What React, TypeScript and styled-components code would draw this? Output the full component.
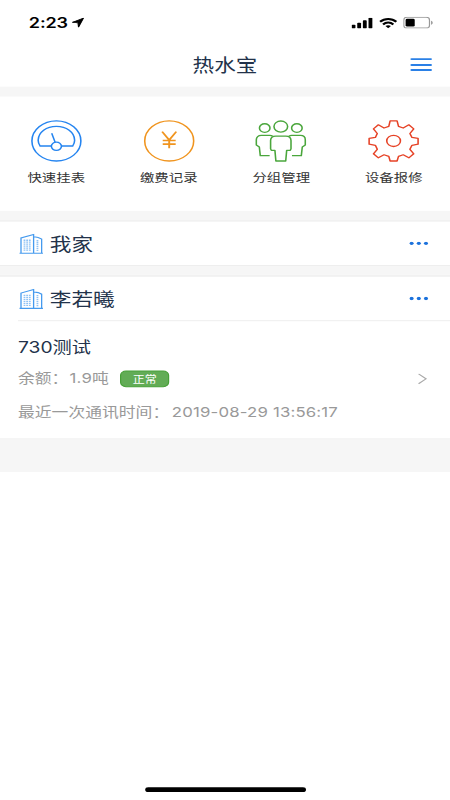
import React from "react";
import styled, { createGlobalStyle } from "styled-components";

const Global = createGlobalStyle`
  * { box-sizing: border-box; }
  html, body { margin: 0; padding: 0; background: #fff; }
  body { width: 450px; height: 800px; overflow: hidden; }
`;

const Viewport = styled.div`
  width: 450px;
  height: 800px;
  overflow: hidden;
  background: #fff;
`;

/* The 375x812 phone layout is stretched to fill the 450x800 viewport. */
const Phone = styled.div`
  width: 375px;
  height: 812px;
  transform: scale(1.2, 0.98522);
  transform-origin: 0 0;
  display: flex;
  flex-direction: column;
  font-family: Inter, "Noto Sans CJK SC", sans-serif;
  color: #22324a;
`;

const StatusBar = styled.div`
  height: 44px;
  padding: 0 14px 0 24px;
  display: flex;
  align-items: center;
  justify-content: space-between;
  color: #000;
  svg { display: block; }
`;

const Cluster = styled.div<{ $gap: number }>`
  display: flex;
  align-items: center;
  gap: ${(p) => p.$gap}px;
  padding-top: 2px;
`;

const Clock = styled.span`
  font-size: 15px;
  line-height: 20px;
  font-weight: 600;
  letter-spacing: -0.1px;
`;

const NavBar = styled.header`
  height: 44px;
  display: grid;
  grid-template-columns: 1fr auto 1fr;
  align-items: center;
  padding: 0 15px;
`;

const Title = styled.h1`
  grid-column: 2;
  margin: 0;
  padding-top: 2px;
  font-size: 18px;
  line-height: 26px;
  font-weight: 400;
`;

const MenuButton = styled.button`
  justify-self: end;
  border: 0;
  padding: 0;
  width: 18px;
  height: 13px;
  margin-bottom: 1px;
  background: none;
  display: flex;
  flex-direction: column;
  justify-content: space-between;
`;

const MenuLine = styled.span`
  height: 2px;
  border-radius: 1px;
  background: #2a80e6;
`;

const Content = styled.main`
  height: 391px;
  background: #f6f6f6;
  padding-top: 10px;
`;

const QuickActions = styled.nav`
  height: 116px;
  background: #fff;
  display: grid;
  grid-template-columns: repeat(4, 1fr);
  padding-top: 24px;
`;

const QuickAction = styled.div`
  display: flex;
  flex-direction: column;
  align-items: center;
  gap: 8px;
  font-size: 12px;
  line-height: 18px;
  color: #333;
  svg { display: block; overflow: visible; }
`;

const Group = styled.section`
  margin-top: 9px;
  background: #fff;
  border-top: 2px solid #f1f1f1;
  border-bottom: 1px solid #eee;
`;

const GroupHeader = styled.div`
  height: 44px;
  padding: 0 18.5px 0 16px;
  display: flex;
  align-items: center;
  svg { display: block; }
`;

const GroupName = styled.h2`
  margin: 0 0 0 5.5px;
  padding-top: 3px;
  flex: 1;
  font-size: 18px;
  line-height: 26px;
  font-weight: 400;
`;

const Device = styled.div`
  margin-left: 15px;
  height: 119.5px;
  border-top: 1px solid #eee;
  padding: 14px 19px 0 0;
  color: #999;
  font-size: 14px;
`;

const DeviceName = styled.h3`
  margin: 0;
  font-size: 16px;
  line-height: 24px;
  font-weight: 400;
  color: #22324a;
`;

const BalanceRow = styled.div`
  display: flex;
  align-items: center;
  height: 24px;
  margin-top: 8px;
  line-height: 24px;
`;

const Value = styled.span`
  margin-left: 1px;
  letter-spacing: 0.1px;
`;

const Timestamp = styled.span`
  margin-left: 2.2px;
  letter-spacing: 0.13px;
`;

const Status = styled.span`
  width: 41px;
  height: 17px;
  margin-left: 9.5px;
  border: 1px solid #47a038;
  border-radius: 5px;
  background: #62ac56;
  color: #fff;
  font-size: 10px;
  line-height: 16px;
  text-align: center;
`;

const Arrow = styled.svg`
  display: block;
  margin-left: auto;
`;

const LastSync = styled.div`
  margin-top: 10px;
  line-height: 24px;
`;

const HomeIndicator = styled.div`
  width: 134px;
  height: 5px;
  margin: auto auto 8px;
  border-radius: 3px;
  background: #000;
`;

const GaugeIcon = () => (
  <svg width="42" height="42" viewBox="0 0 42 42" fill="none" stroke="#2484f0" strokeWidth="1.3">
    <circle cx="21" cy="21" r="20.4" />
    <path d="M16.7 26.2H7.4C6.2 24 5.8 22.3 5.8 20.3C6 12.2 12.7 6.3 21 6.3S36 12.2 36.2 20.3c0 2-.4 3.7-1.6 5.9h-9.3" />
    <circle cx="21" cy="26.5" r="4.2" />
    <path d="M17.1 13.3l2.8 9" />
  </svg>
);

const YenIcon = () => (
  <svg width="42" height="42" viewBox="0 0 42 42" fill="none" stroke="#f0941e" strokeWidth="1.3">
    <circle cx="21" cy="21" r="20.4" />
    <path d="M15.1 11.6l5.9 8.5 5.9-8.5M21 20v8.6M15.6 20.6h10.8M15.6 24.3h10.8" strokeWidth="1.6" />
  </svg>
);

const PeopleIcon = () => (
  <svg width="42" height="42" viewBox="0 0 42 42" fill="none" stroke="#4aa63c" strokeWidth="1.3" strokeLinejoin="round">
    <circle cx="21" cy="6.5" r="5.7" />
    <circle cx="7.6" cy="8" r="4.4" />
    <circle cx="34.4" cy="8" r="4.4" />
    <path d="M16.8 16.1h8.4c2.6 0 4.3 1.8 4.3 4.6v8.4l-.6 1.5h-3l-.8 10.8h-8.2l-.8-10.8h-3l-.6-1.5v-8.4c0-2.8 1.7-4.6 4.3-4.6z" />
    <path d="M14.2 16.2c-.6-.5-1.4-.7-2.3-.7H4.7C2.2 15.5.6 17.3.6 19.8v5.4l2.5 2 .8 8.8h7.8M27.8 16.2c.6-.5 1.4-.7 2.3-.7h7.2c2.5 0 4.1 1.8 4.1 4.3v5.4l-2.5 2-.8 8.8h-7.8" />
  </svg>
);

const GearIcon = () => (
  <svg width="42" height="42" viewBox="0 0 42 42" fill="none" stroke="#e64226" strokeWidth="1.3" strokeLinejoin="round">
    <path d="M18.1.7h5.8l1.2 5.6 3.9 1.6 4.7-3.2 4.1 4.1-3.2 4.7 1.7 4 5.1 1v5.9l-5.1 1.1-1.7 4 3.2 4.6-4.1 4.1-4.7-3.1-3.9 1.6-1.2 4.7h-5.8l-1.1-4.7-4-1.6-4.7 3.1-4.1-4.1 3.2-4.6-1.6-4L.6 24.4v-5.9l5.2-1 1.6-4-3.2-4.7 4.1-4.1L13 7.9l4-1.6z" />
    <circle cx="21" cy="21" r="5.7" />
  </svg>
);

const BuildingIcon = () => (
  <svg width="20" height="21" viewBox="0 0 20 21" fill="none" stroke="#459aee" strokeWidth="1.1">
    <path d="M.2 20h19.6M1.5 20V4.5L12 .9V20M12.4 3.3l3.4.7 2.9 1.6V20" />
    <path d="M4.4 6.2V18M6.6 6.2V18M8.8 6.2V18M15.2 6.5V18" strokeWidth="1.5" strokeDasharray="1.3 .7" opacity=".6" />
  </svg>
);

const MoreIcon = () => (
  <svg width="16" height="4" viewBox="0 0 16 4" fill="#1c72dc">
    <circle cx="2" cy="2" r="1.7" />
    <circle cx="8" cy="2" r="1.7" />
    <circle cx="14" cy="2" r="1.7" />
  </svg>
);

const actions = [
  { label: "快速挂表", Icon: GaugeIcon },
  { label: "缴费记录", Icon: YenIcon },
  { label: "分组管理", Icon: PeopleIcon },
  { label: "设备报修", Icon: GearIcon },
];

const Header = ({ name }: { name: string }) => (
  <GroupHeader>
    <BuildingIcon />
    <GroupName>{name}</GroupName>
    <MoreIcon />
  </GroupHeader>
);

export default function App() {
  return (
    <Viewport>
      <Global />
      <Phone>
        <StatusBar>
          <Cluster $gap={3}>
            <Clock>2:23</Clock>
            <svg width="10" height="10" viewBox="0 0 11 11">
              <path d="M10.5.5L.5 5.1l5 .6.5 4.8z" fill="#000" stroke="#000" strokeWidth="1" strokeLinejoin="round" />
            </svg>
          </Cluster>
          <Cluster $gap={5}>
            <svg width="18" height="11" viewBox="0 0 18 11">
              <rect x="0" y="7" width="3.2" height="4" rx=".8" />
              <rect x="4.7" y="5" width="3.2" height="6" rx=".8" />
              <rect x="9.4" y="2.6" width="3.2" height="8.4" rx=".8" />
              <rect x="14.1" y="0" width="3.2" height="11" rx=".8" />
            </svg>
            <svg width="15" height="11" viewBox="0 0 15 11" fill="none" stroke="#000" strokeWidth="2">
              <path d="M.7 4.1c3.9-3.9 9.7-3.9 13.6 0M3.2 6.8c2.5-2.5 6.1-2.5 8.6 0" />
              <path d="M7.5 10.8L5.2 8.5c1.3-1.1 3.3-1.1 4.6 0z" fill="#000" stroke="none" />
            </svg>
            <svg width="25" height="12" viewBox="0 0 25 12">
              <rect x=".5" y=".5" width="21.4" height="11" rx="2.7" fill="none" stroke="#999" />
              <rect x="2" y="2" width="7.6" height="8" rx="1.3" />
              <path d="M23.2 4v4c.8-.3 1.4-1.1 1.4-2s-.6-1.7-1.4-2z" fill="#999" />
            </svg>
          </Cluster>
        </StatusBar>
        <NavBar>
          <Title>热水宝</Title>
          <MenuButton aria-label="菜单">
            <MenuLine />
            <MenuLine />
            <MenuLine />
          </MenuButton>
        </NavBar>
        <Content>
          <QuickActions>
            {actions.map(({ label, Icon }) => (
              <QuickAction key={label}>
                <Icon />
                <span>{label}</span>
              </QuickAction>
            ))}
          </QuickActions>
          <Group>
            <Header name="我家" />
          </Group>
          <Group>
            <Header name="李若曦" />
            <Device>
              <DeviceName>730测试</DeviceName>
              <BalanceRow>
                <span>余额：</span>
                <Value>1.9吨</Value>
                <Status>正常</Status>
                <Arrow width="8" height="11" viewBox="0 0 8 11" fill="none" stroke="#aaa" strokeWidth="1.1">
                  <path d="M.8.5l6.2 5-6.2 5" />
                </Arrow>
              </BalanceRow>
              <LastSync>
                最近一次通讯时间：<Timestamp>2019-08-29 13:56:17</Timestamp>
              </LastSync>
            </Device>
          </Group>
        </Content>
        <HomeIndicator />
      </Phone>
    </Viewport>
  );
}
